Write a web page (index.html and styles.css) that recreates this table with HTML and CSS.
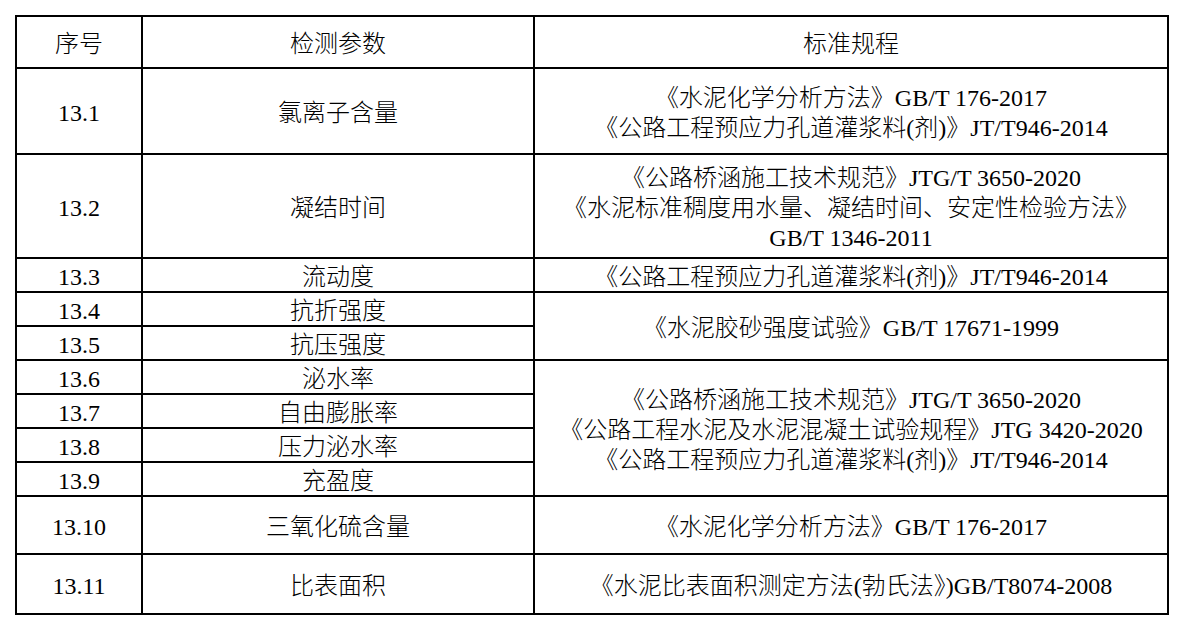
FILE: index.html
```html
<!DOCTYPE html>
<html lang="zh-CN">
<head>
<meta charset="utf-8">
<title>检测参数</title>
<link rel="stylesheet" href="styles.css">
</head>
<body>
<table class="grid">
  <colgroup>
    <col class="c-no">
    <col class="c-param">
    <col class="c-std">
  </colgroup>
  <tr class="h-head">
    <td>序号</td>
    <td>检测参数</td>
    <td>标准规程</td>
  </tr>
  <tr class="h-86">
    <td>13.1</td>
    <td>氯离子含量</td>
    <td>《水泥化学分析方法》GB/T 176-2017<br>《公路工程预应力孔道灌浆料(剂)》JT/T946-2014</td>
  </tr>
  <tr class="h-104">
    <td>13.2</td>
    <td>凝结时间</td>
    <td>《公路桥涵施工技术规范》JTG/T 3650-2020<br>《水泥标准稠度用水量、凝结时间、安定性检验方法》<br>GB/T 1346-2011</td>
  </tr>
  <tr class="h-34">
    <td>13.3</td>
    <td>流动度</td>
    <td>《公路工程预应力孔道灌浆料(剂)》JT/T946-2014</td>
  </tr>
  <tr class="h-34">
    <td>13.4</td>
    <td>抗折强度</td>
    <td rowspan="2" class="span">《水泥胶砂强度试验》GB/T 17671-1999</td>
  </tr>
  <tr class="h-34">
    <td>13.5</td>
    <td>抗压强度</td>
  </tr>
  <tr class="h-34">
    <td>13.6</td>
    <td>泌水率</td>
    <td rowspan="4" class="span">《公路桥涵施工技术规范》JTG/T 3650-2020<br>《公路工程水泥及水泥混凝土试验规程》JTG 3420-2020<br>《公路工程预应力孔道灌浆料(剂)》JT/T946-2014</td>
  </tr>
  <tr class="h-34">
    <td>13.7</td>
    <td>自由膨胀率</td>
  </tr>
  <tr class="h-34">
    <td>13.8</td>
    <td>压力泌水率</td>
  </tr>
  <tr class="h-34">
    <td>13.9</td>
    <td>充盈度</td>
  </tr>
  <tr class="h-58">
    <td>13.10</td>
    <td>三氧化硫含量</td>
    <td>《水泥化学分析方法》GB/T 176-2017</td>
  </tr>
  <tr class="h-60">
    <td>13.11</td>
    <td>比表面积</td>
    <td>《水泥比表面积测定方法(勃氏法》)GB/T8074-2008</td>
  </tr>
</table>
</body>
</html>
```
FILE: styles.css
```css
html, body {
  margin: 0;
  padding: 0;
  background: #ffffff;
}
body {
  padding: 15px;
}
.grid {
  table-layout: fixed;
  border-collapse: separate;
  border-spacing: 0;
  width: 1154px;
  border-left: 2px solid #000;
  border-top: 2px solid #000;
  font-family: "Liberation Serif", "Noto Sans CJK SC", serif;
  font-size: 24px;
  font-weight: 300;
  line-height: 30px;
  color: #000;
}
.c-no { width: 126px; }
.c-param { width: 392px; }
.c-std { width: 634px; }
.grid td {
  box-sizing: border-box;
  padding: 4px 0 0 0;
  border-right: 2px solid #000;
  border-bottom: 2px solid #000;
  text-align: center;
  vertical-align: middle;
  white-space: nowrap;
}
.h-head td { height: 52px; }
.h-86 td { height: 86px; }
.h-104 td { height: 104px; }
.h-34 td { height: 34px; line-height: 26px; }
.h-58 td { height: 58px; }
.h-60 td { height: 60px; }
.grid td.span { height: auto; line-height: 30px; }
```
